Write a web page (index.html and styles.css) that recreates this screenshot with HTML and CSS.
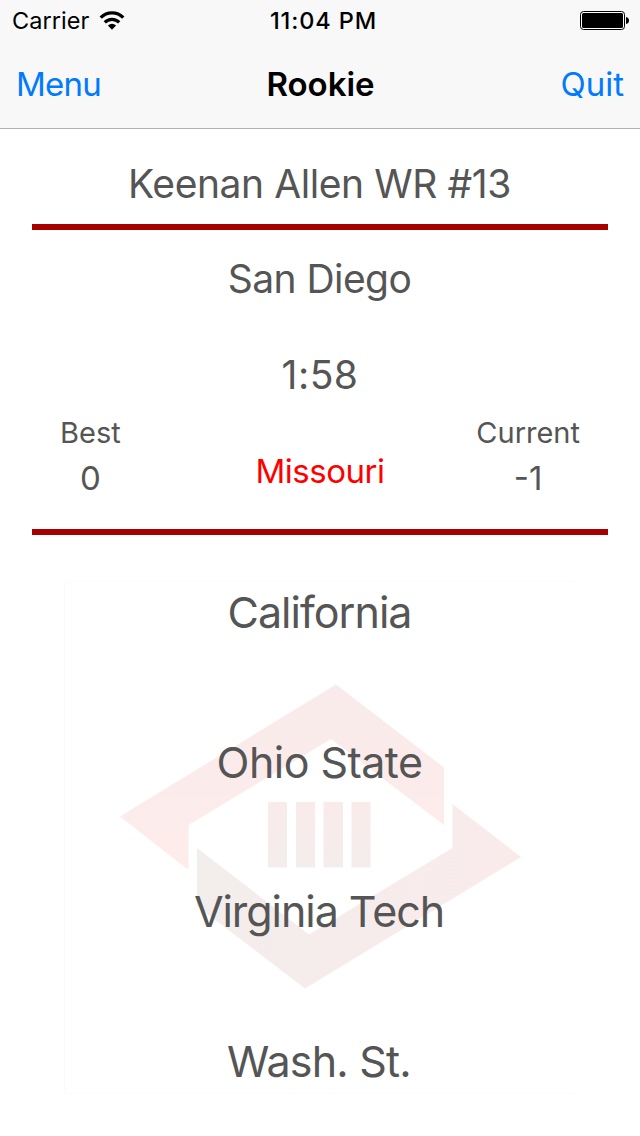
FILE: index.html
```html
<!DOCTYPE html>
<html lang="en">
<head>
<meta charset="utf-8">
<title>Rookie</title>
<link rel="stylesheet" href="styles.css">
</head>
<body>
<div class="screen">
  <header class="topbar">
    <div class="status">
      <div class="carrier"><span>Carrier</span>
        <svg class="wifi" viewBox="0 0 26 20" width="26" height="20">
          <g fill="none" stroke="#000" stroke-width="3.2">
            <path d="M1.700 6.700A15.800 15.800 0 0 1 24.300 6.700"/>
            <path d="M5.800 11.400A10 10 0 0 1 20.200 11.400"/>
          </g>
          <path d="M8.900 14.500Q13 11.200 17.100 14.500L13 18.700Z"/>
        </svg>
      </div>
      <div class="clock">11:04 PM</div>
      <svg class="battery" viewBox="0 0 50 20" width="50" height="20">
        <rect x=".5" y=".5" width="44" height="18" rx="3" fill="#fff" stroke="#000"/>
        <rect x="2" y="2" width="41" height="15" rx="1.5"/>
        <path d="M46 6Q49 6.500 49 9.500T46 13Z"/>
      </svg>
    </div>
    <nav class="nav">
      <a class="nav-link menu">Menu</a>
      <h1 class="title">Rookie</h1>
      <a class="nav-link quit">Quit</a>
    </nav>
  </header>
  <main class="content">
    <div class="line player">Keenan Allen WR #13</div>
    <div class="rule"></div>
    <div class="line team">San Diego</div>
    <div class="line timer">1:58</div>
    <div class="scores">
      <div class="score best"><span class="label">Best</span><span class="value">0</span></div>
      <div class="guess">Missouri</div>
      <div class="score current"><span class="label">Current</span><span class="value">-1</span></div>
    </div>
    <div class="rule"></div>
    <div class="answers">
      <svg class="emblem" viewBox="64 581 512 513" width="512" height="513">
        <defs>
          <linearGradient id="upper" x1="0" y1="0" x2="0" y2="1"><stop offset="0" stop-color="#f9ebeb"/><stop offset="1" stop-color="#fdecea"/></linearGradient>
          <linearGradient id="lower" x1="0" y1="0" x2="1" y2="0"><stop offset="0" stop-color="#f2eeec"/><stop offset=".3" stop-color="#f5ecec"/><stop offset="1" stop-color="#faebeb"/></linearGradient>
          <linearGradient id="bar" x1="0" y1="0" x2="0" y2="1"><stop offset="0" stop-color="#faebeb"/><stop offset="1" stop-color="#f3edeb"/></linearGradient>
        </defs>
        <path d="M64.500 1093.500V582.500" fill="none" stroke="#fafafa"/>
        <path d="M65 581.500H575M65 1093.500H575" fill="none" stroke="#fcfcfc"/>
        <path fill="url(#upper)" d="M120 816.500L336 684.500L444 767.500V825L331 739L188.500 825V870Z"/>
        <path fill="url(#lower)" d="M197 848L309 934.500L452.500 848V804L521 857L305 988.500L197 906Z"/>
        <g fill="url(#bar)">
          <rect x="268" y="802" width="19" height="65.500"/><rect x="296" y="802" width="19" height="65.500"/>
          <rect x="323.500" y="802" width="19.500" height="65.500"/><rect x="351.500" y="802" width="19" height="65.500"/>
        </g>
      </svg>
      <div class="answer california">California</div>
      <div class="answer ohio">Ohio State</div>
      <div class="answer virginia">Virginia Tech</div>
      <div class="answer wash">Wash. St.</div>
    </div>
  </main>
</div>
</body>
</html>
```
FILE: styles.css
```css
* { box-sizing: border-box; }
body { margin: 0; background: #fff; font-family: Inter, "Liberation Sans", sans-serif; color: #555; }
.screen { width: 640px; height: 1136px; overflow: hidden; }
.topbar { height: 129px; background: #f8f8f8; border-bottom: 1px solid #b2b2b2; color: #000; }
.status { height: 41px; display: grid; grid-template-columns: 1fr auto 1fr; align-items: center; padding: 0 10px 0 12px; font-size: 23.5px; }
.carrier { display: flex; align-items: center; gap: 10px; }
.carrier span { letter-spacing: .05px; }
.clock { font-weight: 550; font-size: 23.5px; letter-spacing: .9px; padding-left: 5px; }
.battery { justify-self: end; }
.nav { height: 86px; display: grid; grid-template-columns: 1fr auto 1fr; align-items: center; padding: 0 16px; font-size: 33px; }
.nav-link { color: #007aff; }
.menu { letter-spacing: -.8px; }
.quit { justify-self: end; }
.title { margin: 0; padding-left: 14px; margin-right: 0; font-size: 33px; font-weight: 600; }
.nav .title { position: static; padding-left: 1px; }
.content { padding: 31px 32px 0; }
.line { line-height: 48px; font-size: 39px; text-align: center; white-space: nowrap; }
.player { margin-bottom: 16px; letter-spacing: -.42px; padding-right: 1px; }
.rule { height: 6px; background: #a60000; }
.team { margin-top: 25px; letter-spacing: -.55px; padding-right: 1px; }
.timer { margin-top: 48px; letter-spacing: .5px; }
.scores { height: 130px; display: grid; grid-template-columns: 1fr auto 1fr; padding: 14px 28px 0; line-height: 40px; }
.score { display: flex; flex-direction: column; align-items: center; gap: 5px; }
.best { justify-self: start; }
.current { justify-self: end; }
.label { font-size: 29px; }
.value { font-size: 33px; }
.guess { padding-top: 38px; font-size: 33px; letter-spacing: -.5px; color: #f00; }
.answers { position: relative; padding-top: 3px; }
.emblem { position: absolute; left: 32px; top: 46px; }
.answer { position: relative; height: 149.67px; line-height: 149.67px; font-size: 43px; text-align: center; padding-right: 1px; }
.california { letter-spacing: -.95px; }
.ohio { letter-spacing: -.55px; }
.virginia { letter-spacing: -1.05px; padding-right: 2px; }
.wash { letter-spacing: -.8px; padding-right: 2px; }
```
